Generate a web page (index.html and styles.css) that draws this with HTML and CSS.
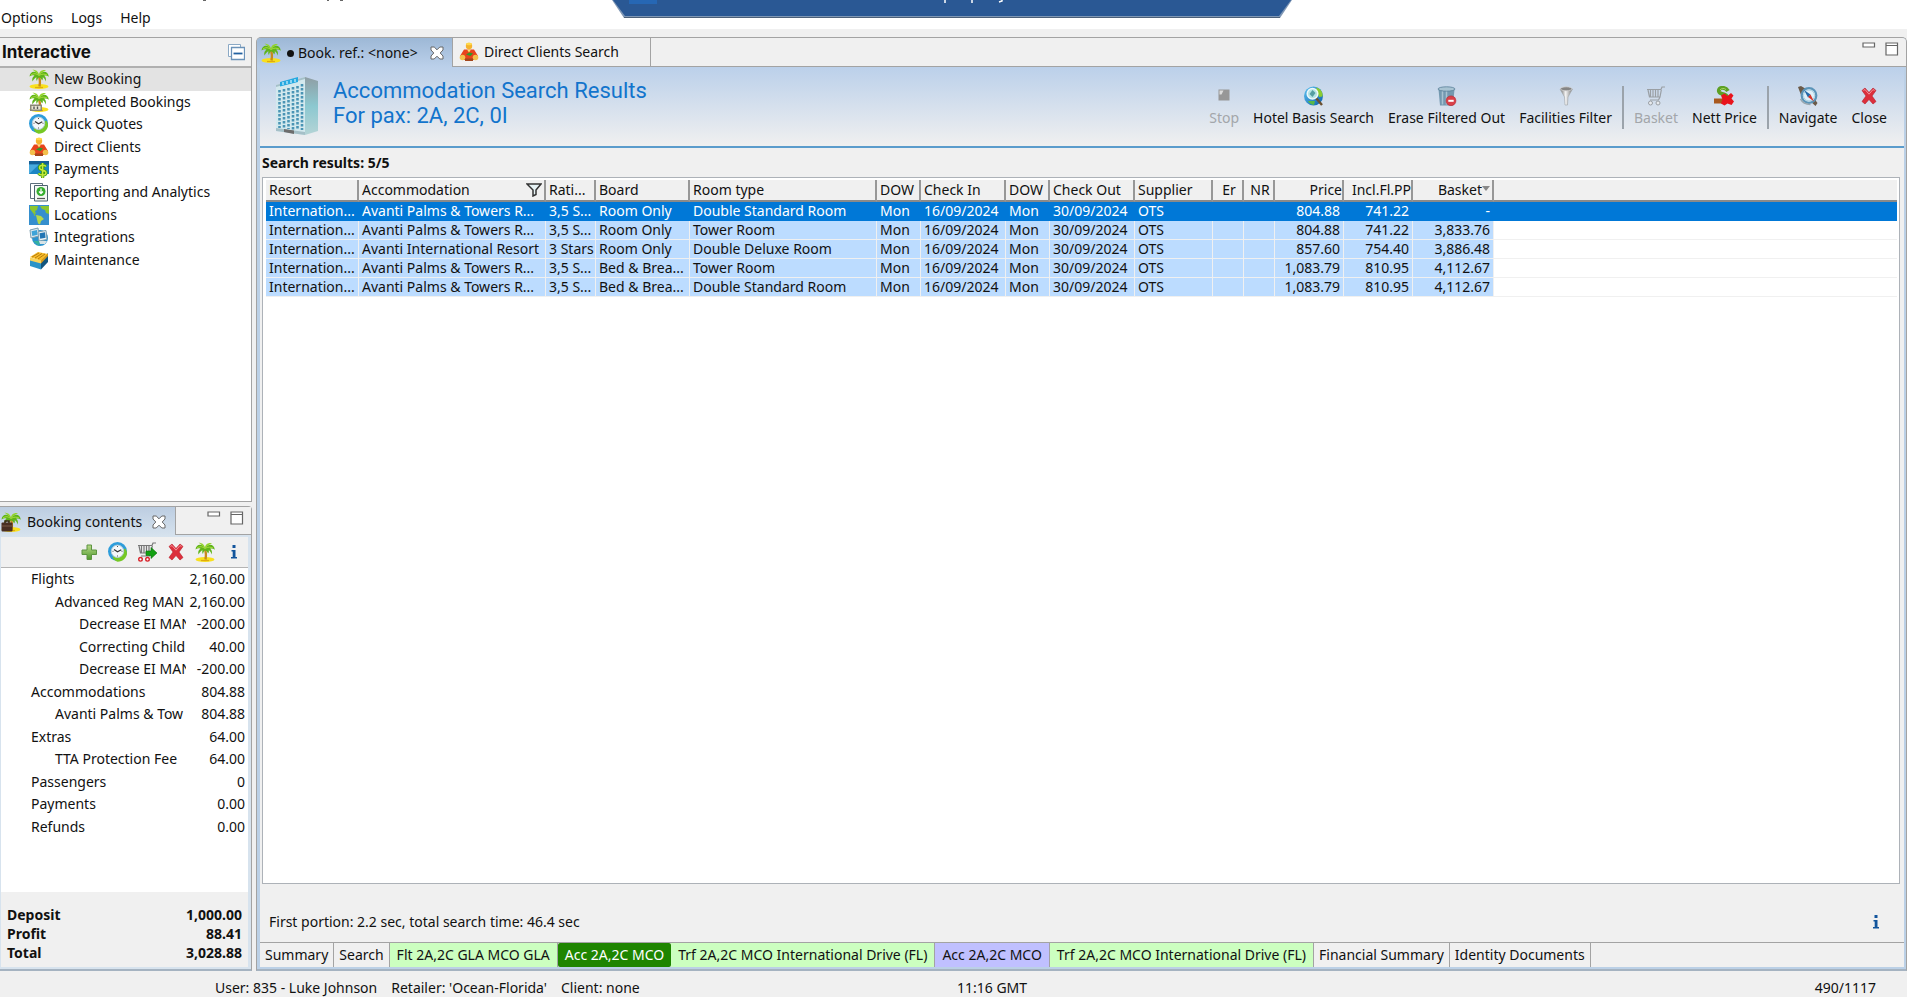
FILE: index.html
```html
<!DOCTYPE html>
<html lang="en">

<head>
  <meta charset="UTF-8" />
  <meta name="viewport" content="width=device-width, initial-scale=1.0" />
  <title>Accommodation Search Results</title>
  <link rel="stylesheet" href="styles.css">
</head>

<body>
  <!-- Icon set -->
  <svg class="icon-defs" aria-hidden="true">
    <defs>
      <linearGradient id="gGreen" x1="0" y1="0" x2="0" y2="1">
        <stop offset="0" stop-color="#b9d98a" />
        <stop offset="1" stop-color="#4f9a2c" />
      </linearGradient>
      <linearGradient id="gBlue" x1="0" y1="0" x2="1" y2="1">
        <stop offset="0" stop-color="#5fc4f0" />
        <stop offset="1" stop-color="#0a5fae" />
      </linearGradient>
      <linearGradient id="gSide" x1="0" y1="0" x2="0" y2="1">
        <stop offset="0" stop-color="#8f9ea4" />
        <stop offset="0.5" stop-color="#8cc8d0" />
        <stop offset="1" stop-color="#b4d4d6" />
      </linearGradient>
      <linearGradient id="gFunnel" x1="0" y1="0" x2="1" y2="0">
        <stop offset="0" stop-color="#666" />
        <stop offset="0.45" stop-color="#f4f4f4" />
        <stop offset="1" stop-color="#777" />
      </linearGradient>
    </defs>
    <symbol id="i-palm" viewBox="0 0 20 20">
      <ellipse cx="10" cy="17.500" rx="9.500" ry="2.500" fill="#f9e01c" />
      <path d="M6 18.500h8" stroke="#e0aa10" stroke-width="1.200" />
      <path d="M9.500 6c1.500 3.500 1.800 7.500 1 11.500" stroke="#c78a1c" stroke-width="2.400" fill="none" />
      <path d="M10 6C7 1 1 2 .5 7.500 2.500 6.200 4 6 5.500 6.800 3.500 8 2.800 10 3.500 12.500 5 10 6 9 7.500 8.300 7 10 7.200 11 8 12c.3-2 1-3 2-3.800 1 .8 2.500 1 3 3.300 1-.8 1-2 .7-3.200C15 9 16 10 16.500 12.500c1-2.500.2-4.500-1.300-5.700 1.600-.5 3-.2 4.600 1C19.200 2.500 14 1 10.500 5.500z" fill="#5fb41a" />
      <path d="M10 6C9.500 3 7.500 .8 3.500 .8 5 1.600 8 4 10 6c0-3 2.500-5.600 7-4.800C14 2.500 12 4 10 6z" fill="#93d42a" />
      <path d="M2 6c3-2 5-1.500 8 .5 3-2 5.500-1.500 8-.5" stroke="#a9dc3c" fill="none" />
    </symbol>
    <symbol id="i-palm-done" viewBox="0 0 20 20">
      <use href="#i-palm" width="20" height="20" />
      <rect x="1" y="12.500" width="12" height="6.500" fill="#8b8876" />
      <rect x="2.500" y="14" width="9" height="3.500" fill="#e9e6d2" />
      <path d="M5 14.500v2.500M8.500 14.500v2.500" stroke="#555" stroke-width="1.400" />
    </symbol>
    <symbol id="i-palm-case" viewBox="0 0 20 20">
      <use href="#i-palm" width="20" height="20" />
      <path d="M4 11V9h4v2" stroke="#3c2417" stroke-width="1.400" fill="none" />
      <rect x="0.500" y="10.500" width="11" height="9" rx="1" fill="#4a2f22" />
      <path d="M1 14h10" stroke="#7a5a45" />
    </symbol>
    <symbol id="i-clock" viewBox="0 0 20 20">
      <circle cx="9.500" cy="9.500" r="9.500" fill="#2e9ddb" />
      <path d="M17 6.500c5 5 0 13-7.500 13.200-3-1-5-3.500-5-5.500 6 2 9.500-1 9.500-5z" fill="#76c825" />
      <circle cx="9.500" cy="9.300" r="6.200" fill="#f4f8fa" stroke="#b3cbd8" />
      <path d="M6 7.500l3.500 2.300 3.800-2" stroke="#333" stroke-width="1.200" fill="none" />
      <path d="M9.500 4v1M9.500 13.500v1M4.500 9.300h1M13.500 9.300h1" stroke="#555" />
    </symbol>
    <symbol id="i-client" viewBox="0 0 20 20">
      <circle cx="10" cy="4" r="3.200" fill="#f6b32d" />
      <ellipse cx="10" cy="2" rx="3" ry="1.300" fill="#ffd84a" />
      <path d="M5 7.500h10l4 6.500-2.500 3-1.500-3v4h-10v-4L3.500 17 1 14z" fill="#e8431c" />
      <circle cx="3.500" cy="15.500" r="2.800" fill="#f2c04c" />
      <circle cx="16.500" cy="15.500" r="2.800" fill="#f2c04c" />
      <path d="M8 7.500l2 3 2-3z" fill="#ffe06a" />
      <path d="M7 12.500l3.500-2 3.500 1-2.500 2.500z" fill="#2c9a2c" />
      <path d="M6 16.500h8v2.500H6z" fill="#a3471d" />
    </symbol>
    <symbol id="i-payment" viewBox="0 0 20 20">
      <rect x="0" y="2" width="20" height="13" fill="#1c86c4" />
      <rect x="0" y="2" width="20" height="3.500" fill="#155f96" />
      <path d="M0 15L10 5.500H0z" fill="#49aade" />
      <path d="M17 7.500c-2-2-6.500-1.500-6.500 1.200 0 3.200 6.500 1.800 6.500 5 0 3-5.500 3-7.500.8M13.600 4v15" stroke="#3b9a10" stroke-width="3.200" fill="none" />
      <path d="M17 7.500c-2-2-6.500-1.500-6.500 1.200 0 3.200 6.500 1.800 6.500 5 0 3-5.500 3-7.500.8M13.600 4v15" stroke="#c5e83c" stroke-width="1.500" fill="none" />
    </symbol>
    <symbol id="i-report" viewBox="0 0 20 20">
      <path d="M1.500 1.500h12v15h-12z" fill="#fff" stroke="#5d707c" />
      <path d="M5.500 3.500h13v15.500h-13z" fill="#f3f8f3" stroke="#4d626f" />
      <circle cx="12" cy="9.500" r="4.500" fill="#33ad2c" />
      <path d="M12 6.500v4.500M10 9.500l2 2 2-2" stroke="#fff" stroke-width="1.300" fill="none" />
      <path d="M8 16.500h8" stroke="#555" stroke-width="1.200" />
    </symbol>
    <symbol id="i-globe" viewBox="0 0 20 20">
      <rect width="20" height="20" fill="#358fce" />
      <path d="M1 1h8l-1 4-2 1 1 3-3-1-3-4zM11 1h9v8l-3-1-1-3-3-1z" fill="#8cc62e" />
      <path d="M7 10l5 1 3 3-3 2-1 3.500-2-1-1-4z" fill="#b4d84a" />
      <path d="M4 6l2 5" stroke="#8cc62e" />
    </symbol>
    <symbol id="i-integration" viewBox="0 0 20 20">
      <circle cx="11" cy="11" r="8" fill="#2b93cf" />
      <path d="M4 14l6 5 1-5z" fill="#35b0a0" />
      <path d="M1 3l8-2 1 8-8 2z" fill="#dce9ef" stroke="#7c9fb0" />
      <path d="M2.500 4.300L8 3l.6 4.800L3.300 9z" fill="#3ea3d8" />
      <path d="M9 5l8-1.500 1 9-8 1.500z" fill="#eef4f6" stroke="#7c9fb0" />
      <path d="M10.500 6.200L16 5.200l.6 5.500-5.400 1z" fill="#2276b4" />
      <path d="M10 14h8l-2 3h-5z" fill="#d8e3e6" />
    </symbol>
    <symbol id="i-maintenance" viewBox="0 0 20 20">
      <path d="M1 8l11 3v8.500L1 16z" fill="#2b93c8" />
      <path d="M12 11l7-8v9l-7 7.500z" fill="#12557e" />
      <path d="M1 7l8-5 10 2-7 7z" fill="#f6bd2a" />
      <path d="M3 7l7-4M6 8l7-4.500M9 9l7-5" stroke="#b97b0c" />
      <path d="M1 7.500v3l11 3v-3z" fill="#f9d45c" />
      <path d="M12 10.500v3l7-7.500V3.500z" fill="#d99a18" />
    </symbol>
    <symbol id="i-collapse" viewBox="0 0 17 17">
      <path d="M.5 .5h12v12h-12z" fill="#fff" stroke="#8ba9c5" />
      <path d="M3.500 3.500h13v12h-13z" fill="#fff" stroke="#6b92b8" stroke-width="1.300" />
      <path d="M5.500 9.500h9" stroke="#2361a0" stroke-width="1.800" />
    </symbol>
    <symbol id="i-tabclose" viewBox="0 0 14 14">
      <path d="M1 1h3.200L7 3.800 9.800 1H13v3L10.200 7 13 10v3H9.800L7 10.200 4.200 13H1v-3L3.800 7 1 4z" fill="#fff" stroke="#666" />
    </symbol>
    <symbol id="i-min" viewBox="0 0 14 14">
      <path d="M1 1h11.500v4H1z" fill="#fff" stroke="#666" stroke-width="1.200" />
    </symbol>
    <symbol id="i-max" viewBox="0 0 14 14">
      <path d="M1 1h11.500v12H1zM1 3.500h11.500" fill="#fff" stroke="#666" stroke-width="1.200" />
    </symbol>
    <symbol id="i-plus" viewBox="0 0 20 20">
      <path d="M8 3h4.500v5h5v4.500h-5v5H8v-5H3V8h5z" fill="url(#gGreen)" stroke="#5c9440" />
    </symbol>
    <symbol id="i-cart" viewBox="0 0 20 20">
      <path d="M1 3.500h14l1-2.500h3M2 4l1.500 7H14l1.300-7M4.500 4v7M7 4v7M9.500 4v7M12 4v7M14 11l-1.500 3H4" stroke="currentColor" stroke-width="1.200" fill="none" />
    </symbol>
    <symbol id="i-cart-grey" viewBox="0 0 20 20">
      <use href="#i-cart" width="20" height="20" color="#9a9fa4" />
      <circle cx="4.500" cy="17" r="2" fill="#e8ebee" stroke="#9a9fa4" />
      <circle cx="12" cy="17" r="2" fill="#e8ebee" stroke="#9a9fa4" />
    </symbol>
    <symbol id="i-cart-go" viewBox="0 0 20 20">
      <use href="#i-cart" width="20" height="20" color="#777" />
      <circle cx="3.500" cy="17.300" r="1.800" fill="#fff" stroke="#d8242c" stroke-width="1.400" />
      <circle cx="10.500" cy="17.300" r="1.800" fill="#fff" stroke="#d8242c" stroke-width="1.400" />
      <path d="M9 9h5V5.500l6 5.500-6 5.500V13.500H9z" fill="#12a012" stroke="#0b6e0b" stroke-width=".6" />
    </symbol>
    <symbol id="i-x" viewBox="0 0 20 20">
      <path d="M3 4.500l3-2.500 4 4.500L14 2l3 2.500-4 5.500 4 5.500-3 2.500-4-4.500L6 18l-3-2.500L7 10z" fill="#dc2f3c" stroke="#b81c28" stroke-width=".6" />
      <path d="M4.500 4.500l1.500-1 4 4.700L14 3.500l1.500 1" stroke="#f49096" fill="none" />
    </symbol>
    <symbol id="i-info" viewBox="0 0 20 20">
      <path d="M8.500 3h3v3h-3zM7.500 8h4v7h1.500v1.600H7V15h1.700V9.500H7.500z" fill="#12559c" />
    </symbol>
    <symbol id="i-stop" viewBox="0 0 20 20">
      <path d="M4.500 3.500h11v11h-11z" fill="#979797" />
      <path d="M5.500 4.500h4l-2 4h-2z" fill="#dcdcdc" />
    </symbol>
    <symbol id="i-hotelsearch" viewBox="0 0 20 20">
      <circle cx="9.500" cy="10" r="9.500" fill="url(#gBlue)" />
      <path d="M12 1.500c5 1 7 5 6.500 9L15 11z" fill="#8ccc30" />
      <path d="M4 15c1 2 3 3.500 6 4l1-4z" fill="#58b848" />
      <path d="M12 12l6 7" stroke="#6b5030" stroke-width="2.400" />
      <circle cx="8.500" cy="7.800" r="5.300" fill="#b6e4e4" stroke="#eef8fa" stroke-width="1.500" />
      <path d="M8.500 4l3 3-3 4-3-3z" fill="#559ea2" />
    </symbol>
    <symbol id="i-erase" viewBox="0 0 20 20">
      <path d="M1.500 3h16l-1.500 16.500H3z" fill="#7499b0" />
      <path d="M5.500 5v13.500M9.500 5v13.500" stroke="#a8c3d2" stroke-width="1.500" />
      <ellipse cx="9.500" cy="3" rx="8.500" ry="2.200" fill="#a9c4d3" stroke="#587f98" stroke-width=".8" />
      <circle cx="14" cy="14.800" r="4.900" fill="#d9414a" stroke="#b5252e" stroke-width=".6" />
      <path d="M11.300 14.800h5.400" stroke="#fff" stroke-width="2" />
    </symbol>
    <symbol id="i-funnel" viewBox="0 0 20 20">
      <path d="M4 3l4.500 8 .5 8h2.500l.5-8 4.500-8z" fill="url(#gFunnel)" stroke="#a0a4a8" stroke-width=".6" />
      <ellipse cx="10.200" cy="2.800" rx="5.800" ry="2" fill="#858585" stroke="#d4d4d4" stroke-width=".8" />
    </symbol>
    <symbol id="i-nett" viewBox="0 0 20 20">
      <path d="M14 5C11 .5 4 1 5 5.500c1 3.500 7.500 2 8 5.500" stroke="#5da024" stroke-width="4" fill="none" />
      <path d="M6 4c1.500-2 4-2 6-.5" stroke="#a8d860" fill="none" />
      <path d="M0 12.500h10v5H0z" fill="#a8591f" />
      <path d="M7 9.500l3.500-2 3 2.500L17 7l2.500 2.500-2 3 2.500 3-2.500 3.500-4-1.500-3 2-3.500-2 1.500-4z" fill="#e8141c" />
    </symbol>
    <symbol id="i-compass" viewBox="0 0 20 20">
      <path d="M0 1l3-1 5 3-5 6zM12 15l6-3v3l1.500 2-2 3z" fill="#6b5a48" />
      <circle cx="11" cy="9.500" r="7.300" fill="#dff0f8" stroke="#5b94b8" stroke-width="2.200" />
      <circle cx="11" cy="9.500" r="5.500" fill="none" stroke="#a9cfe2" />
      <path d="M6 4l6.500 4.500-2.500 3z" fill="#2268a8" />
      <path d="M16 15.500l-6-4.500 2.500-2.500z" fill="#d8352a" />
      <path d="M2.500 13c2 4 5.500 5.500 10 5.500" stroke="#9aa7ae" stroke-width="1.500" fill="none" />
    </symbol>
    <symbol id="i-filter" viewBox="0 0 16 14">
      <path d="M1 1h14l-5 6v4.500L7 13V7z" fill="#e6f2f4" stroke="#333" stroke-width="1.500" />
    </symbol>
    <symbol id="i-hotel" viewBox="0 0 46 60">
      <path d="M2 9L31 1v58L2 55z" fill="#d3e9ee" />
      <path d="M31 1l13 4v50l-13 4z" fill="url(#gSide)" />
      <path d="M2 55l29 4v-3L2 52zM2 9l29-8v2L2 11z" fill="#a5c0c8" />
      <path d="M5.500 14v38M10 13v39M14.500 12v41M19 11v43M23.500 10v44M28 8v46" stroke="#4a94b4" stroke-width="2.600" stroke-dasharray="2.400 1.600" />
      <path d="M6 6l18-5v5L6 10.500z" fill="#25a9e0" />
      <path d="M9 6v3M13 5v3M17 4v3M21 3v3" stroke="#c4ecfa" stroke-width="1.300" />
      <path d="M10 53l10 1.500V58L10 56z" fill="#6d6d6d" />
    </symbol>
  </svg>

  <div class="app">
    <!-- Remote session bar -->
    <svg class="session-bar" viewBox="0 0 680 18" aria-hidden="true">
      <path d="M0 0h680l-12 18H12z" fill="#7f97b5" />
      <path d="M1 0h678l-12 16H13z" fill="#2a5894" />
      <path d="M12 17.500h656" stroke="#4c6078" />
      <path d="M17 0h28v4H17z" fill="#2667b4" />
      <path d="M333 0v3M360 0v3M390 0v1l-3 1" stroke="#fff" stroke-width="1.500" fill="none" />
    </svg>

    <div class="menu">
      <svg class="title-edge" width="350" height="2" aria-hidden="true">
        <path d="M203 .5h3M327 .5h2M340 .5h3" stroke="#666" />
      </svg>
      <button type="button">Options</button>
      <button type="button">Logs</button>
      <button type="button">Help</button>
    </div>

    <div class="workspace">
      <div class="sidebar">
        <div class="panel interactive">
          <div class="interactive-head">
            <h2>Interactive</h2>
            <button type="button" aria-label="Collapse all"><svg width="17" height="17"><use href="#i-collapse" /></svg></button>
          </div>
          <nav class="nav">
            <a class="selected" href="#"><svg class="icon"><use href="#i-palm" /></svg>New Booking</a>
            <a href="#"><svg class="icon"><use href="#i-palm-done" /></svg>Completed Bookings</a>
            <a href="#"><svg class="icon"><use href="#i-clock" /></svg>Quick Quotes</a>
            <a href="#"><svg class="icon"><use href="#i-client" /></svg>Direct Clients</a>
            <a href="#"><svg class="icon"><use href="#i-payment" /></svg>Payments</a>
            <a href="#"><svg class="icon"><use href="#i-report" /></svg>Reporting and Analytics</a>
            <a href="#"><svg class="icon"><use href="#i-globe" /></svg>Locations</a>
            <a href="#"><svg class="icon"><use href="#i-integration" /></svg>Integrations</a>
            <a href="#"><svg class="icon"><use href="#i-maintenance" /></svg>Maintenance</a>
          </nav>
        </div>

        <div class="panel contents">
          <div class="contents-head">
            <div class="contents-tab">
              <svg class="icon"><use href="#i-palm-case" /></svg>
              <span>Booking contents</span>
              <button type="button" aria-label="Close view"><svg width="14" height="14"><use href="#i-tabclose" /></svg></button>
            </div>
            <div class="window-buttons">
              <button type="button" aria-label="Minimize"><svg width="14" height="14"><use href="#i-min" /></svg></button>
              <button type="button" aria-label="Maximize"><svg width="14" height="14"><use href="#i-max" /></svg></button>
            </div>
          </div>
          <div class="contents-tools">
            <button type="button" aria-label="Add"><svg class="icon"><use href="#i-plus" /></svg></button>
            <button type="button" aria-label="Quote"><svg class="icon"><use href="#i-clock" /></svg></button>
            <button type="button" aria-label="Move to basket"><svg class="icon"><use href="#i-cart-go" /></svg></button>
            <button type="button" aria-label="Delete"><svg class="icon"><use href="#i-x" /></svg></button>
            <button type="button" aria-label="Booking"><svg class="icon"><use href="#i-palm" /></svg></button>
            <button type="button" aria-label="Info"><svg class="icon"><use href="#i-info" /></svg></button>
          </div>
          <div class="contents-body">
            <table class="tree">
              <tr><td>Flights</td><td>2,160.00</td></tr>
              <tr><td class="level-2">Advanced Reg MAN</td><td>2,160.00</td></tr>
              <tr><td class="level-3">Decrease EI MAN</td><td>-200.00</td></tr>
              <tr><td class="level-3">Correcting Child</td><td>40.00</td></tr>
              <tr><td class="level-3">Decrease EI MAN</td><td>-200.00</td></tr>
              <tr><td>Accommodations</td><td>804.88</td></tr>
              <tr><td class="level-2">Avanti Palms &amp; Tow</td><td>804.88</td></tr>
              <tr><td>Extras</td><td>64.00</td></tr>
              <tr><td class="level-2">TTA Protection Fee</td><td>64.00</td></tr>
              <tr><td>Passengers</td><td>0</td></tr>
              <tr><td>Payments</td><td>0.00</td></tr>
              <tr><td>Refunds</td><td>0.00</td></tr>
            </table>
          </div>
          <dl class="totals">
            <div><dt>Deposit</dt><dd>1,000.00</dd></div>
            <div><dt>Profit</dt><dd>88.41</dd></div>
            <div><dt>Total</dt><dd>3,028.88</dd></div>
          </dl>
        </div>
      </div>

      <main class="editor">
        <div class="editor-tabs">
          <div class="editor-tab active">
            <svg class="icon"><use href="#i-palm" /></svg>
            <span class="dirty"></span>
            <span>Book. ref.: &lt;none&gt;</span>
            <button type="button" aria-label="Close tab"><svg width="14" height="14"><use href="#i-tabclose" /></svg></button>
          </div>
          <div class="editor-strip">
            <button type="button" class="editor-tab"><svg class="icon"><use href="#i-client" /></svg>Direct Clients Search</button>
            <div class="window-buttons">
              <button type="button" aria-label="Minimize"><svg width="14" height="14"><use href="#i-min" /></svg></button>
              <button type="button" aria-label="Maximize"><svg width="14" height="14"><use href="#i-max" /></svg></button>
            </div>
          </div>
        </div>

        <div class="editor-body">
          <div class="banner">
            <svg class="hotel" width="46" height="60"><use href="#i-hotel" /></svg>
            <h1>Accommodation Search Results<br>For pax: 2A, 2C, 0I</h1>
            <div class="toolbar">
              <button type="button" disabled><svg class="icon"><use href="#i-stop" /></svg>Stop</button>
              <button type="button"><svg class="icon"><use href="#i-hotelsearch" /></svg>Hotel Basis Search</button>
              <button type="button"><svg class="icon"><use href="#i-erase" /></svg>Erase Filtered Out</button>
              <button type="button"><svg class="icon"><use href="#i-funnel" /></svg>Facilities Filter</button>
              <span class="divider"></span>
              <button type="button" disabled><svg class="icon"><use href="#i-cart-grey" /></svg>Basket</button>
              <button type="button"><svg class="icon"><use href="#i-nett" /></svg>Nett Price</button>
              <span class="divider"></span>
              <button type="button"><svg class="icon"><use href="#i-compass" /></svg>Navigate</button>
              <button type="button"><svg class="icon"><use href="#i-x" /></svg>Close</button>
            </div>
          </div>

          <h3 class="count">Search results: 5/5</h3>

          <div class="results">
            <table>
              <colgroup>
                <col class="c-resort"><col class="c-acc"><col class="c-rating"><col class="c-board"><col class="c-room">
                <col class="c-dow"><col class="c-date"><col class="c-dow"><col class="c-date"><col class="c-supplier">
                <col class="c-flag"><col class="c-flag"><col class="c-price"><col class="c-price"><col class="c-basket"><col>
              </colgroup>
              <thead>
                <tr>
                  <th>Resort</th>
                  <th><div class="filtered">Accommodation<svg width="16" height="14"><use href="#i-filter" /></svg></div></th>
                  <th>Rati...</th>
                  <th>Board</th>
                  <th>Room type</th>
                  <th>DOW</th>
                  <th>Check In</th>
                  <th>DOW</th>
                  <th>Check Out</th>
                  <th>Supplier</th>
                  <th class="mid">Er</th>
                  <th class="mid">NR</th>
                  <th class="num">Price</th>
                  <th class="num">Incl.Fl.PP</th>
                  <th class="num sorted">Basket</th>
                  <th class="rest"></th>
                </tr>
              </thead>
              <tbody>
                <tr class="selected">
                  <td>Internation...</td><td>Avanti Palms &amp; Towers R...</td><td>3,5 S...</td><td>Room Only</td><td>Double Standard Room</td>
                  <td>Mon</td><td>16/09/2024</td><td>Mon</td><td>30/09/2024</td><td>OTS</td><td></td><td></td>
                  <td class="num">804.88</td><td class="num">741.22</td><td class="num">-</td><td class="rest"></td>
                </tr>
                <tr>
                  <td>Internation...</td><td>Avanti Palms &amp; Towers R...</td><td>3,5 S...</td><td>Room Only</td><td>Tower Room</td>
                  <td>Mon</td><td>16/09/2024</td><td>Mon</td><td>30/09/2024</td><td>OTS</td><td></td><td></td>
                  <td class="num">804.88</td><td class="num">741.22</td><td class="num">3,833.76</td><td class="rest"></td>
                </tr>
                <tr>
                  <td>Internation...</td><td>Avanti International Resort</td><td>3 Stars</td><td>Room Only</td><td>Double Deluxe Room</td>
                  <td>Mon</td><td>16/09/2024</td><td>Mon</td><td>30/09/2024</td><td>OTS</td><td></td><td></td>
                  <td class="num">857.60</td><td class="num">754.40</td><td class="num">3,886.48</td><td class="rest"></td>
                </tr>
                <tr>
                  <td>Internation...</td><td>Avanti Palms &amp; Towers R...</td><td>3,5 S...</td><td>Bed &amp; Brea...</td><td>Tower Room</td>
                  <td>Mon</td><td>16/09/2024</td><td>Mon</td><td>30/09/2024</td><td>OTS</td><td></td><td></td>
                  <td class="num">1,083.79</td><td class="num">810.95</td><td class="num">4,112.67</td><td class="rest"></td>
                </tr>
                <tr>
                  <td>Internation...</td><td>Avanti Palms &amp; Towers R...</td><td>3,5 S...</td><td>Bed &amp; Brea...</td><td>Double Standard Room</td>
                  <td>Mon</td><td>16/09/2024</td><td>Mon</td><td>30/09/2024</td><td>OTS</td><td></td><td></td>
                  <td class="num">1,083.79</td><td class="num">810.95</td><td class="num">4,112.67</td><td class="rest"></td>
                </tr>
              </tbody>
            </table>
          </div>

          <div class="timing">
            <span>First portion: 2.2 sec, total search time: 46.4 sec</span>
            <button type="button" aria-label="Info"><svg class="icon"><use href="#i-info" /></svg></button>
          </div>

          <div class="pages">
            <button type="button">Summary</button>
            <button type="button">Search</button>
            <button type="button" class="product green">Flt 2A,2C GLA MCO GLA</button>
            <button type="button" class="product current">Acc 2A,2C MCO</button>
            <button type="button" class="product green">Trf 2A,2C MCO International Drive (FL)</button>
            <button type="button" class="product violet">Acc 2A,2C MCO</button>
            <button type="button" class="product green">Trf 2A,2C MCO International Drive (FL)</button>
            <button type="button">Financial Summary</button>
            <button type="button">Identity Documents</button>
          </div>
        </div>
      </main>
    </div>

    <footer class="status">
      <div class="status-user">
        <span>User: 835 - Luke Johnson</span>
        <span>Retailer: 'Ocean-Florida'</span>
        <span>Client: none</span>
      </div>
      <span class="status-time">11:16 GMT</span>
      <span class="status-memory">490/1117</span>
    </footer>
  </div>
</body>

</html>
```
FILE: styles.css
```css
* {
  box-sizing: border-box;
}

body {
  margin: 0;
  background: #f0f0f0;
  color: #111;
  font-family: "Noto Sans", "Segoe UI", sans-serif;
  font-size: 14px;
  line-height: 18px;
}

button {
  margin: 0;
  padding: 0;
  border: none;
  background: none;
  color: inherit;
  font: inherit;
  white-space: nowrap;
}

svg {
  display: block;
  flex: none;
}

h1,
h2,
h3 {
  margin: 0;
}

.icon {
  width: 20px;
  height: 20px;
}

.icon-defs {
  position: absolute;
  width: 0;
  height: 0;
}

.app {
  display: flex;
  flex-direction: column;
  min-height: 100vh;
}

/* Top */
.session-bar {
  position: absolute;
  top: 0;
  left: 50%;
  width: 680px;
  height: 18px;
  margin-left: -342px;
}

.title-edge {
  position: absolute;
  top: 0;
  left: 0;
}

.menu {
  display: flex;
  align-items: flex-start;
  gap: 18px;
  height: 29px;
  padding: 9px 1px 0;
  background: #fff;
}

.workspace {
  flex: 1;
  display: flex;
  gap: 4px;
  padding-top: 8px;
}

/* Left side */
.sidebar {
  flex: none;
  width: 252px;
  display: grid;
  grid-template-rows: 1fr 1fr;
  gap: 4px;
}

.panel {
  display: flex;
  flex-direction: column;
  border: 1px solid #a3a3a3;
  border-left: none;
  background: #fff;
}

.interactive-head {
  display: flex;
  align-items: center;
  justify-content: space-between;
  height: 30px;
  padding: 0 6px 0 2px;
  background: #f0f0f0;
  border-bottom: 2px solid #b0b0b0;
}

.interactive-head h2 {
  font-family: Inter, Arial, sans-serif;
  font-size: 17px;
}

.nav {
  display: grid;
  grid-auto-rows: 1fr;
  height: 203px;
}

.nav a {
  display: flex;
  align-items: center;
  gap: 5px;
  padding-left: 29px;
  color: inherit;
  text-decoration: none;
}

.nav .selected {
  background: #e3e3e3;
}

.contents {
  border-radius: 0 4px 0 0;
  border-bottom: 2px solid #a5b3c1;
  background: #d7e3ee;
}

.contents-head {
  display: flex;
  height: 30px;
}

.contents-tab {
  display: flex;
  align-items: center;
  gap: 6px;
  width: 175px;
  padding-left: 1px;
  background: linear-gradient(#bccde1, #d7e3ee);
}

.contents-tab button {
  margin-left: 4px;
}

.window-buttons {
  display: flex;
  align-items: flex-start;
  gap: 9px;
}

.contents .window-buttons {
  flex: 1;
  justify-content: flex-end;
  height: 28px;
  padding: 4px 7px 0 0;
  background: #f0f0f0;
  border-left: 1px solid #a3a3a3;
  border-bottom: 1px solid #a3a3a3;
}

.window-buttons button {
  line-height: 14px;
}

.contents-tools {
  display: flex;
  align-items: center;
  justify-content: flex-end;
  gap: 9px;
  height: 31px;
  margin: 0 3px 0 1px;
  padding-right: 4px;
  background: #f0f0f0;
  border-bottom: 1px solid #b4b4b4;
}

.contents-body {
  flex: 1;
  margin: 0 3px 0 1px;
  background: #fff;
}

.tree {
  width: 100%;
  height: 270px;
  table-layout: fixed;
  border-collapse: collapse;
}

.tree td {
  padding: 0 0 0 30px;
  overflow: hidden;
  white-space: nowrap;
}

.tree .level-2 {
  padding-left: 54px;
}

.tree .level-3 {
  padding-left: 78px;
}

.tree td:last-child {
  width: 62px;
  padding: 0 3px 0 0;
  text-align: right;
}

.totals {
  margin: 0 3px 2px 1px;
  padding: 13px 6px 5px;
  background: #f0f0f0;
  font-weight: bold;
  line-height: 19px;
}

.totals div {
  display: flex;
  justify-content: space-between;
}

.totals dd {
  margin: 0;
}

/* Editor */
.editor {
  flex: 1;
  min-width: 0;
  display: flex;
  flex-direction: column;
  border: 1px solid #a3a3a3;
  border-bottom: 2px solid #a5b3c1;
  border-radius: 5px 5px 0 0;
  background: #bbd0e6;
}

.editor-tabs {
  display: flex;
  height: 29px;
}

.editor-tab {
  display: flex;
  align-items: center;
  gap: 5px;
  padding-left: 6px;
}

.editor-tab.active {
  width: 195px;
  padding-left: 4px;
  border-radius: 4px 0 0 0;
  background: linear-gradient(#9db8d6, #bbd0ea);
}

.editor-tab.active button {
  margin-left: 7px;
}

.dirty {
  width: 7px;
  height: 7px;
  margin: 2px -1px 0 1px;
  border-radius: 50%;
  background: #111;
}

.editor-strip {
  flex: 1;
  display: flex;
  justify-content: space-between;
  background: #f0f0f0;
  border-left: 1px solid #a3a3a3;
  border-bottom: 1px solid #a3a3a3;
  border-radius: 0 4px 0 0;
}

.editor-strip .editor-tab {
  width: 198px;
  border-right: 1px solid #a3a3a3;
}

.editor-strip .window-buttons {
  padding: 4px 7px 0 0;
}

.editor-body {
  flex: 1;
  display: flex;
  flex-direction: column;
  margin: 0 2px 2px 3px;
  background: #f0f0f0;
}

.banner {
  display: flex;
  align-items: flex-start;
  height: 81px;
  padding: 9px 10px 0 14px;
  background: linear-gradient(#bbd0ea, #f0f0f0);
  border-bottom: 2px solid #5b9ccc;
}

.banner h1 {
  flex: 1;
  padding: 2px 0 0 13px;
  color: #1274cc;
  font: 22px/25px Roboto, Arial, sans-serif;
  white-space: nowrap;
}

.toolbar {
  display: flex;
  padding-top: 10px;
}

.toolbar button {
  display: flex;
  flex-direction: column;
  align-items: center;
  gap: 3px;
  padding: 0 7px;
}

.toolbar button:disabled {
  color: #a3a6aa;
}

.divider {
  width: 2px;
  height: 43px;
  margin: 0 3px;
  background: #9ba3ab;
}

.count {
  padding: 6px 2px 5px;
  font-size: 14px;
}

.results {
  flex: 1;
  margin: 0 4px 0 2px;
  padding: 2px 2px 0 3px;
  border: 1px solid #adb2b8;
  background: #fff;
}

.results table {
  width: 100%;
  table-layout: fixed;
  border-collapse: separate;
  border-spacing: 0;
}

.c-resort { width: 93px; }
.c-acc { width: 187px; }
.c-rating { width: 50px; }
.c-board { width: 94px; }
.c-room { width: 187px; }
.c-dow { width: 44px; }
.c-date { width: 85px; }
.c-supplier { width: 78px; }
.c-flag { width: 31px; }
.c-price { width: 69px; }
.c-basket { width: 81px; }

.results th {
  height: 22px;
  padding: 0 0 0 3px;
  background: #f0f0f0;
  border-right: 2px solid #979797;
  border-bottom: 2px solid #8a8a8a;
  font-weight: normal;
  text-align: left;
  white-space: nowrap;
}

.results td {
  height: 19px;
  padding: 0 0 0 3px;
  overflow: hidden;
  background: #bcdcff;
  border-right: 1px solid #f0f0f0;
  border-bottom: 1px solid #f0f0f0;
  line-height: 16px;
  white-space: nowrap;
}

.results td.num {
  padding: 0 3px 0 0;
  text-align: right;
}

.results th.num {
  padding: 0;
  text-align: right;
}

.results th.mid {
  text-align: center;
}

.results .rest {
  border-right: none;
}

.results td.rest {
  background: #fff;
}

.results .selected td {
  background: #0078d7;
  border-color: #0078d7;
  color: #fff;
}

.filtered {
  display: flex;
  align-items: center;
  justify-content: space-between;
  padding-right: 2px;
}

.sorted::after {
  content: "";
  display: inline-block;
  margin-right: 2px;
  border: 4px solid transparent;
  border-top: 5px solid #888;
  border-bottom: none;
  vertical-align: 4px;
}

.timing {
  display: flex;
  align-items: center;
  justify-content: space-between;
  height: 58px;
  padding: 18px 18px 0 9px;
}

.pages {
  display: flex;
  height: 25px;
  border-top: 1px solid #a3a3a3;
}

.pages button {
  padding: 0 5px;
  border-right: 1px solid #a3a3a3;
}

.pages .product {
  padding: 0 7px;
}

.pages .green {
  background: #ccffc0;
}

.pages .violet {
  background: #c0c0ff;
}

.pages .current {
  border-radius: 2px;
  border-right: none;
  background: #1e8500;
  color: #fff;
}

/* Status bar */
.status {
  display: flex;
  align-items: center;
  justify-content: space-between;
  height: 26px;
  padding: 8px 31px 0 215px;
}

.status-user {
  display: flex;
  gap: 14px;
  width: 742px;
}

.status-time {
  flex: 1;
}
```
